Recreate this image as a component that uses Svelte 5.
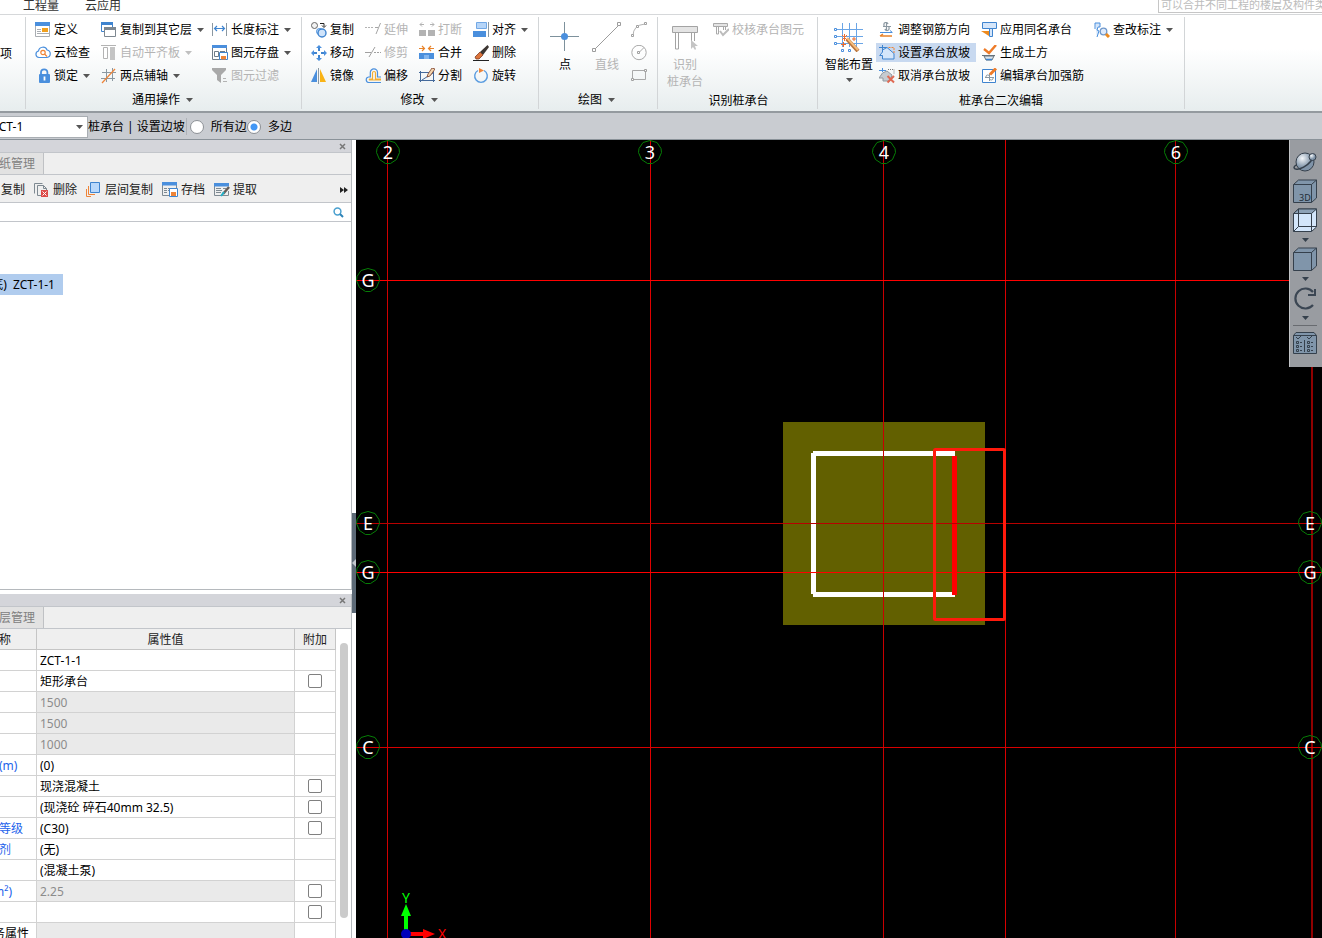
<script lang="ts">
  type Tool = { icon: string; label: string; off?: boolean; menu?: boolean; on?: boolean };

  const icons: Record<string, string> = {
    define:
      '<path d="M.5 1v13.500h14V1" fill="#fff" stroke="#a9adb2"/><path fill="#4a8fdd" d="M0 0h15v4H0z"/><path stroke="#a9adb2" d="M2 7.500h4M2 9.500h4M2 11.500h12"/><path fill="#f0a01e" d="M7 6h6v4H7z"/>',
    cloud:
      '<path d="M4 12.500a3.300 3.300 0 0 1-.5-6.500 4.500 4.500 0 0 1 8.600-1A3.800 3.800 0 0 1 12 12.500z" fill="#fff" stroke="#4a8fdd" stroke-width="1.200"/><circle cx="8" cy="7.500" r="2.200" fill="none" stroke="#ee8438" stroke-width="1.200"/><path d="M9.500 9l2.500 2.500" stroke="#ee8438" stroke-width="1.300"/>',
    lock:
      '<path d="M6 7V4.500a3.200 3.200 0 0 1 6.400 0V7" fill="none" stroke="#4a8fdd" stroke-width="1.800"/><rect x="4" y="6" width="11" height="9" rx="1" fill="#4a8fdd"/><path d="M9.500 8.500v4" stroke="#fff" stroke-width="1.800"/>',
    floors:
      '<path d="M.5 1.500h11v8H.5z" fill="#fff" stroke="#3f84cf"/><path d="M0 0h12v3H0z" fill="#3f84cf"/><path d="M3.500 6.500h11v8h-11z" fill="#fff" stroke="#7d8790"/><path d="M3 5h12v3H3z" fill="#7d8790"/>',
    align:
      '<path d="M0 .5h15" stroke="#b3b3b3"/><path d="M2.500 2.500h4v11h-4z" fill="#fff" stroke="#b3b3b3"/><path d="M9 2h5v13H9z" fill="#c4c4c4"/>',
    axis:
      '<path d="M5.500 1v13M11.500 0v13M1 4.500h14M0 10.500h14" stroke="#8b98a1" fill="none"/><path d="M1 15L14 1" stroke="#ee8438" stroke-width="1.200"/>',
    length:
      '<path d="M.5 1v13M14.500 1v13" stroke="#8b98a1"/><path d="M2.500 6.500h10M5 4L2.500 6.500 5 9M10 4l2.500 2.500L10 9" fill="none" stroke="#3f84cf" stroke-width="1.200"/>',
    store:
      '<path d="M.5 2v12.500H8M14.500 2v5" fill="none" stroke="#6e7c88"/><path d="M0 0h15v3H0z" fill="#4a8fdd"/><path d="M2.500 6.500h4v5h-4zM8 6.500h5" fill="none" stroke="#6e7c88"/><path d="M7.500 7.500h8v7h-8z" fill="#fff" stroke="#3f84cf"/><path d="M9 11h5v3.500H9z" fill="#ee8438"/>',
    filter:
      '<path d="M0 0h14v2L9 7v8l-4-3V7L0 2z" fill="#a9a9a9"/><path d="M11 10.500h3M11 13.500h4" stroke="#b3b3b3"/>',
    copy:
      '<circle cx="3.500" cy="3.500" r="3" fill="#f2f2f2" stroke="#666"/><path d="M9 1.500h4v3M11 3.500l2 2 2-2" fill="none" stroke="#222"/><circle cx="8.500" cy="9.500" r="3" fill="#cfe3fa" stroke="#4a8fdd"/><circle cx="11" cy="11" r="4" fill="#cfe3fa" stroke="#3f84cf" stroke-width="1.400"/>',
    move: '<path d="M8 2v4M8 10v4M2 8h4M10 8h4" stroke="#3f84cf" stroke-width="2"/><path d="M8 0l3 3H5zM8 16l3-3H5zM0 8l3-3v6zM16 8l-3-3v6z" fill="#4a8fdd"/>',
    mirror:
      '<path d="M6 1v13H0z" fill="#4a8fdd"/><path d="M9 1v13h6z" fill="#f9b316"/><path d="M7.500 0v16" stroke="#8b98a1"/>',
    extend:
      '<path d="M0 5.500h9" stroke="#b3b3b3" stroke-dasharray="2 1"/><path d="M10 5.500h3M15.500 1L11 12" fill="none" stroke="#a5a5a5"/>',
    trim: '<path d="M0 7.500h6" stroke="#a0a0a0"/><path d="M9 7.500h7" stroke="#a0a0a0" stroke-dasharray="2 1"/><path d="M10 2L4 12" stroke="#a0a0a0"/>',
    offset:
      '<path d="M16 14.500H3.500a2.800 2.800 0 0 1 0-5.500h1.800V4.500a3.600 3.600 0 0 1 7.200 0V9H16" fill="none" stroke="#4a8fdd" stroke-width="1.200"/><path d="M16 12H4.500a.8.8 0 0 1 0-1h3V5a1.500 1.500 0 0 1 3 0v6H16" fill="none" stroke="#f3ae33" stroke-width="1.200"/>',
    cut: '<path d="M0 8h7v6H0zM9 8h7v6H9z" fill="#b3b3b3"/><path d="M1 2.500h4M11 2.500h4M3 .5l-2 2 2 2M13 .5l2 2-2 2" fill="none" stroke="#b3b3b3"/>',
    merge:
      '<path d="M0 8h15v6H0z" fill="#4a8fdd"/><path d="M0 3.500h5M10 3.500h5M3 1l2.500 2.500L3 6M12 1L9.500 3.500 12 6" fill="none" stroke="#e8832a" stroke-width="1.200"/><path d="M5 10h5v4H5z" fill="#82b5ee"/>',
    split:
      '<path d="M1.500 3v11M14.500 3v11M0 4.500h10M0 12.500h16M3 12L14 5" fill="none" stroke="#44699b"/><path d="M9 6l4-6 3 1-5 7-3 1z" fill="#f4d7b0" stroke="#7b3c26" stroke-width=".8"/>',
    justify:
      '<path d="M3.500.5h10v6h-10z" fill="#b6d5f8" stroke="#72a8e5"/><path d="M0 9h13v6H0z" fill="#4a8fdd"/><path d="M15.500 0v15" stroke="#8b98a1"/>',
    erase:
      '<path d="M14.500 0L16 2 10 10 7 7z" fill="#3c3632"/><path d="M7 7l3 3-4 4H3l-1-2z" fill="#dc7339" stroke="#7b3c26" stroke-width=".8"/><path d="M0 15.500h16" stroke="#222"/>',
    rotate:
      '<path d="M5 2.500a6.300 6.300 0 1 0 6 0" fill="none" stroke="#5a9ce0" stroke-width="1.400"/><path d="M6 0l5 2.500L6 5z" fill="#ee8438"/>',
    check:
      '<path d="M.5 1.500h14v3H.5z" fill="#e4e4e4" stroke="#a9a9a9"/><path d="M3.500 5v7h2V5M10.500 5v3M12.500 5v3" fill="none" stroke="#a9a9a9"/><path d="M7 9l3 4 6-6" fill="none" stroke="#bcbcbc" stroke-width="2"/>',
    rebar:
      '<path d="M7.500 0v9M4 4.500h8M5 4V3a2 2 0 0 1 4-1M10 5v1a2 2 0 0 1-4 1" fill="none" stroke="#8b98a1" stroke-width="1.200"/><path d="M1 10.500h12M11 8.500l2.500 2" stroke="#4a8fdd" fill="none"/><path d="M1 14h12M4 12l-3 2" stroke="#e8832a" stroke-width="1.400" fill="none"/>',
    slope:
      '<path d="M3.500 0v5M0 2.500h8" fill="none" stroke="#3f84cf"/><path d="M3.500 5L8 2.500l7 6v5.500H3.500v-3.500H.7L3.500 7z" fill="#d5e6fa" stroke="#3f84cf"/><path d="M9.500 2.500h5.500v6" fill="none" stroke="#ee8438" stroke-dasharray="2 1"/>',
    unslope:
      '<path d="M0 2.500h7M3.500 0v4" stroke="#4a8fdd"/><path d="M3.500 5L8 3l5 4-2 6H4v-3H0z" fill="#c6cbd0" stroke="#9299a0"/><path d="M9 1.500h6V6" fill="none" stroke="#777" stroke-dasharray="1 1"/><path d="M8.500 8l6.500 6.500M15 8l-6.500 6.500" stroke="#df6a53" stroke-width="2"/>',
    apply:
      '<path d="M1.500.5h14v6h-14z" fill="#d5e6fa" stroke="#3f84cf"/><path d="M8.500 6.500h3v8h-3z" fill="#d5e6fa" stroke="#3f84cf"/><path d="M0 9h8v5z" fill="#ee8a1d"/>',
    earth:
      '<path d="M3 4l5 4 7-8" fill="none" stroke="#ee7b28" stroke-width="2.400"/><path d="M1 10.500h13M3 11l2 4h6l2-4z" fill="#dce5ed" stroke="#66737d"/><path d="M5 14.500h6" stroke="#3f84cf" stroke-width="1.500"/>',
    edit: '<path d="M1.500 1.500h13v13h-13z" fill="#fff" stroke="#3f84cf"/><path d="M8.500 6v7M4 9.500h9M5 9V8a2 2 0 0 1 3.500 0M12 10v1a2 2 0 0 1-3.500 0" fill="none" stroke="#8b98a1"/><path d="M15 .5L9 6.500" stroke="#ee7b28" stroke-width="3"/>',
    inspect:
      '<path d="M1 1h5v4H4l-1 3 2 1-2 6" fill="#d5e6fa" stroke="#4a8fdd"/><path d="M1 1v6" stroke="#4a8fdd"/><circle cx="9.500" cy="9.500" r="3.300" fill="#dfeafa" stroke="#6f98cb" stroke-width="1.300"/><path d="M12 12l3 3" stroke="#ee8a1d" stroke-width="3"/>',
    remove:
      '<path d="M.5 11.500V1.500h8M3.500 13.500v-10h6l3 3M9.500 3.500v3h3v2" fill="none" stroke="#7f8a92"/><path d="M3.500 13.500H7" stroke="#7f8a92"/><path d="M7 8h7v7H7z" fill="#dd4a48"/><path d="M8.500 9.500l4 4M12.500 9.500l-4 4" stroke="#fff"/>',
    layerCopy:
      '<path d="M4.500.5h9v10h-9z" fill="#b9d8fb" stroke="#3f84cf"/><path d="M2.500 4v8.500H9M.5 7v7.500H5" fill="none" stroke="#ee8438"/>',
    archive:
      '<path d="M.5 2v11.500H7M14.500 2v5M2 6.500h3M2 8.500h3M2 10.500h3M6 6.500h3M6 8.500h2M10 6.500h3" fill="none" stroke="#7f8a92"/><path d="M0 0h15v3.500H0z" fill="#4a8fdd"/><path d="M7.500 6.500h8v8h-8z" fill="#fff" stroke="#3f84cf"/><path d="M9 10h5v4H9z" fill="#ee8438"/>',
    extract:
      '<path d="M.5 2v11.500h14V9M2 6.500h5M2 8.500h6M2 10.500h5M9 6.500h3" fill="none" stroke="#7f8a92"/><path d="M0 1h15v3.500H0z" fill="#4a8fdd"/><path d="M15 5l-6 7" stroke="#665d58" stroke-width="2.500"/><path d="M10 10l-3 4" stroke="#23b1c8" stroke-width="2"/>',
    arc: '<path d="M2 14Q2 3 14 2" fill="none" stroke="#b3b3b3"/><path d="M.5 12.500h2v2h-2zM5.500 3.500h2v2h-2zM13.500.5h2v2h-2z" fill="#fff" stroke="#a0a0a0"/>',
    circle:
      '<circle cx="8" cy="7.500" r="7.200" fill="none" stroke="#a9a9a9"/><path d="M8 7.500l5-5" stroke="#a9a9a9"/><path d="M6.500 6.500h2v2h-2z" fill="#fff" stroke="#a0a0a0"/>',
    rect: '<path d="M1.500 2.500h13v9h-13z" fill="none" stroke="#a9a9a9"/><path d="M.5 10.500h2v2h-2zM13.500 1.500h2v2h-2z" fill="#fff" stroke="#a0a0a0"/>',
  };

  const common: Tool[][] = [
    [
      { icon: "define", label: "定义" },
      { icon: "cloud", label: "云检查" },
      { icon: "lock", label: "锁定", menu: true },
    ],
    [
      { icon: "floors", label: "复制到其它层", menu: true },
      { icon: "align", label: "自动平齐板", off: true, menu: true },
      { icon: "axis", label: "两点辅轴", menu: true },
    ],
    [
      { icon: "length", label: "长度标注", menu: true },
      { icon: "store", label: "图元存盘", menu: true },
      { icon: "filter", label: "图元过滤", off: true },
    ],
  ];

  const modify: Tool[][] = [
    [
      { icon: "copy", label: "复制" },
      { icon: "move", label: "移动" },
      { icon: "mirror", label: "镜像" },
    ],
    [
      { icon: "extend", label: "延伸", off: true },
      { icon: "trim", label: "修剪", off: true },
      { icon: "offset", label: "偏移" },
    ],
    [
      { icon: "cut", label: "打断", off: true },
      { icon: "merge", label: "合并" },
      { icon: "split", label: "分割" },
    ],
    [
      { icon: "justify", label: "对齐", menu: true },
      { icon: "erase", label: "删除" },
      { icon: "rotate", label: "旋转" },
    ],
  ];

  const edit: Tool[][] = [
    [
      { icon: "rebar", label: "调整钢筋方向" },
      { icon: "slope", label: "设置承台放坡", on: true },
      { icon: "unslope", label: "取消承台放坡" },
    ],
    [
      { icon: "apply", label: "应用同名承台" },
      { icon: "earth", label: "生成土方" },
      { icon: "edit", label: "编辑承台加强筋" },
    ],
    [{ icon: "inspect", label: "查改标注", menu: true }],
  ];

  const listTools = [
    { icon: "remove", label: "删除" },
    { icon: "layerCopy", label: "层间复制" },
    { icon: "archive", label: "存档" },
    { icon: "extract", label: "提取" },
  ];

  const props = [
    { name: "", value: "ZCT-1-1" },
    { name: "", value: "矩形承台", check: true },
    { name: "", value: "1500", locked: true },
    { name: "", value: "1500", locked: true },
    { name: "", value: "1000", locked: true },
    { name: "(m)", value: "(0)", blue: true },
    { name: "", value: "现浇混凝土", check: true },
    { name: "", value: "(现浇砼 碎石40mm 32.5)", check: true },
    { name: "等级", value: "(C30)", check: true, blue: true },
    { name: "剂", value: "(无)", blue: true },
    { name: "", value: "(混凝土泵)" },
    { name: "m²)", value: "2.25", locked: true, check: true, blue: true, cut: true },
    { name: "", value: "", check: true },
    { name: "务属性", value: "", locked: true, cut: true },
  ];

  const columns = [
    { x: 31, color: "#d00000" },
    { x: 294, color: "#e00000" },
    { x: 527, color: "#c80000" },
    { x: 649, color: "#d80000" },
    { x: 819, color: "#c80000" },
    { x: 955, color: "#900000", width: 2 },
  ];
  const rows = [
    { y: 140, color: "#ff0000" },
    { y: 383, color: "#b80000" },
    { y: 432, color: "#ff0000" },
    { y: 607, color: "#d80000" },
  ];
  const bubbles = [
    { x: 32, y: 12, text: "2" },
    { x: 294, y: 12, text: "3" },
    { x: 528, y: 12, text: "4" },
    { x: 820, y: 12, text: "6" },
    { x: 12, y: 140, text: "G" },
    { x: 12, y: 383, text: "E" },
    { x: 12, y: 432, text: "G" },
    { x: 12, y: 607, text: "C" },
    { x: 954, y: 383, text: "E" },
    { x: 954, y: 432, text: "G" },
    { x: 954, y: 607, text: "C" },
  ];

  let slopeMode = $state("multi");
  let member = $state("ZCT-1");
</script>

{#snippet icon(name: string)}
  <svg class="icon" viewBox="0 0 16 16" aria-hidden="true">{@html icons[name]}</svg>
{/snippet}

{#snippet arrow()}
  <svg class="arrow" viewBox="0 0 7 4" aria-hidden="true"><path d="M0 0h7L3.500 4z" /></svg>
{/snippet}

{#snippet toolGrid(cols: Tool[][])}
  {#each cols as col}
    <div class="tools">
      {#each col as tool}
        <button class="tool" class:off={tool.off} class:on={tool.on}>
          {@render icon(tool.icon)}
          <span>{tool.label}</span>
          {#if tool.menu}{@render arrow()}{/if}
        </button>
      {/each}
    </div>
  {/each}
{/snippet}

{#snippet titleBar()}
  <div class="title-bar">
    <button class="close" aria-label="关闭">
      <svg viewBox="0 0 7 7"><path d="M1 1l5 5M6 1L1 6" stroke="#777" stroke-width="1.500" /></svg>
    </button>
  </div>
{/snippet}

<div class="app">
  <nav class="tabs">
    <a href="#quantity">工程量</a>
    <a href="#cloud">云应用</a>
    <input class="hint" aria-label="搜索" placeholder="可以合并不同工程的楼层及构件类型" />
  </nav>

  <div class="ribbon">
    <section class="group first">
      <div class="body"><button class="tool">项</button></div>
    </section>

    <section class="group common">
      <div class="body">{@render toolGrid(common)}</div>
      <button class="caption">通用操作 {@render arrow()}</button>
    </section>

    <section class="group modify">
      <div class="body">{@render toolGrid(modify)}</div>
      <button class="caption">修改 {@render arrow()}</button>
    </section>

    <section class="group draw">
      <div class="body">
        <button class="big">
          <svg viewBox="0 0 30 30">
            <path d="M0 14.500h29M14.500 0v29" stroke="#7d919c" />
            <circle cx="14.500" cy="14.500" r="3.500" fill="#4a8fdd" />
          </svg>
          点
        </button>
        <button class="big off">
          <svg viewBox="0 0 30 30">
            <path d="M3 27L27 3" stroke="#9c9c9c" />
            <path d="M.5 26.500h3v3h-3zM25.500.5h3v3h-3z" fill="#fff" stroke="#9c9c9c" />
          </svg>
          直线
        </button>
        <div class="tools">
          <button class="tool" aria-label="弧">{@render icon("arc")}</button>
          <button class="tool" aria-label="圆">{@render icon("circle")}</button>
          <button class="tool" aria-label="矩形">{@render icon("rect")}</button>
        </div>
      </div>
      <button class="caption">绘图 {@render arrow()}</button>
    </section>

    <section class="group identify">
      <div class="body">
        <button class="big off">
          <svg viewBox="0 0 30 30">
            <path d="M2.500 4.500h25v6h-25z" fill="#e4e4e4" stroke="#a3a3a3" />
            <path d="M5.500 11v16h3V11M21.500 11v8M24.500 11v8" fill="none" stroke="#a3a3a3" />
            <path d="M21 18v9l2-2 2 3 1-1-1-3h3z" fill="#c4c4c4" />
          </svg>
          识别<br />桩承台
        </button>
        {@render toolGrid([[{ icon: "check", label: "校核承台图元", off: true }]])}
      </div>
      <div class="caption">识别桩承台</div>
    </section>

    <section class="group edit">
      <div class="body">
        <button class="big">
          <svg viewBox="0 0 30 30">
            <path d="M8.500 1v24M15.500 1v24M22.500 1v24M2 7.500h27M2 14.500h27M2 21.500h27" stroke="#6aa5e6" />
            <path d="M.5 6.500h2v2h-2zM.5 13.500h2v2h-2zM.5 20.500h2v2h-2zM7.500 27.500h2v2h-2zM14.500 27.500h2v2h-2z" fill="#fff" stroke="#4a8fdd" />
            <path d="M13 17l11 12" stroke="#b9743b" stroke-width="4" />
            <path d="M13 16l11 12" stroke="#f5bd7e" stroke-width="2" />
            <path d="M8 13l5 5M13 13l-5 5M10.500 12v7M20 15v4M18 17h4M9.500 20v5M7 22.500h5" stroke="#ee6d2d" />
          </svg>
          智能布置
          {@render arrow()}
        </button>
        {@render toolGrid(edit)}
      </div>
      <div class="caption">桩承台二次编辑</div>
    </section>
  </div>

  <div class="options">
    <div class="member">
      <select bind:value={member} aria-label="构件">
        <option>ZCT-1</option>
      </select>
      {@render arrow()}
    </div>
    <span>桩承台 | 设置边坡</span>
    <i class="divider"></i>
    <label><input type="radio" value="all" bind:group={slopeMode} />所有边</label>
    <label><input type="radio" value="multi" bind:group={slopeMode} />多边</label>
  </div>

  <main>
    <aside>
      <section class="panel list">
        {@render titleBar()}
        <div class="panel-tabs"><button>纸管理</button></div>
        <div class="toolbar">
          <button>复制</button>
          {#each listTools as tool}
            <button>{@render icon(tool.icon)}{tool.label}</button>
          {/each}
          <button class="more" aria-label="更多">
            <svg viewBox="0 0 8 6"><path d="M0 0l4 3-4 3zM4 0l4 3-4 3z" fill="#222" /></svg>
          </button>
        </div>
        <div class="search">
          <input type="text" aria-label="搜索构件" />
          <svg viewBox="0 0 11 11" aria-hidden="true">
            <circle cx="4.500" cy="4.500" r="3.400" fill="none" stroke="#4aa0cf" stroke-width="1.500" />
            <path d="M7 7l3 3" stroke="#2d83b8" stroke-width="2" />
          </svg>
        </div>
        <div class="tree">
          <button><span>底)&nbsp; ZCT-1-1</span></button>
        </div>
      </section>

      <section class="panel properties">
        {@render titleBar()}
        <div class="panel-tabs"><button>层管理</button></div>
        <div class="table-wrap">
          <table>
            <colgroup><col class="c-name" /><col /><col class="c-check" /></colgroup>
            <thead>
              <tr><th class="name"><span>称</span></th><th>属性值</th><th>附加</th></tr>
            </thead>
            <tbody>
              {#each props as row, i}
                <tr>
                  <td class="name" class:blue={row.blue}><span class:cut={row.cut}>{row.name}</span></td>
                  <td class:locked={row.locked}>{row.value}</td>
                  <td class="check">
                    {#if row.check}<input type="checkbox" aria-label={`附加 ${i + 1}`} />{/if}
                  </td>
                </tr>
              {/each}
            </tbody>
          </table>
          <div class="scroll"><i></i></div>
        </div>
      </section>
    </aside>

    <div class="splitter">
      <button aria-label="收起">
        <svg viewBox="0 0 4 8"><path d="M4 0v8L0 4z" fill="#c3c8ce" /></svg>
      </button>
    </div>

    <div class="canvas">
      <svg class="drawing">
        <rect x="427" y="282" width="202" height="203" fill="#626000" />
        <g stroke="#fff" stroke-width="5">
          <path d="M457.500 313v141" />
          <path d="M457 313.500h142M457 454.500h142" />
        </g>
        <path d="M598.500 316v139" stroke="#f00" stroke-width="5" />
        {#each columns as c}
          <rect x={c.x} y="0" width={c.width ?? 1} height="100%" fill={c.color} />
        {/each}
        {#each rows as r}
          <rect x="0" y={r.y} width="100%" height="1" fill={r.color} />
        {/each}
        <rect x="578.500" y="309.500" width="70" height="170" rx="1" fill="none" stroke="#ff1a0c" stroke-width="3" />
        {#each bubbles as b}
          <g transform={`translate(${b.x} ${b.y})`}>
            <path d="M0-11.500l7 2 4 6 .5 4-3 7-6 4h-5l-6-4-3-7 .5-4 4-6z" fill="none" stroke="#067d06" />
            <text class="mark" y="7">{b.text}</text>
          </g>
        {/each}
        <path d="M50 794V776" stroke="#0f0" stroke-width="4" />
        <path d="M50 764l5 12H45z" fill="#0f0" />
        <path d="M50 794h18" stroke="#f00" stroke-width="4" />
        <path d="M79 794l-12 5v-10z" fill="#f00" />
        <circle cx="50" cy="794" r="5" fill="#00b" />
        <text class="axis y" x="50" y="763">Y</text>
        <text class="axis x" x="86" y="799">X</text>
      </svg>

      <div class="views">
        <button aria-label="动态观察">
          <svg viewBox="0 0 24 24">
            <defs>
              <radialGradient id="ball" cx=".35" cy=".3"><stop offset="0" stop-color="#f4f7fa" /><stop offset="1" stop-color="#7f93a8" /></radialGradient>
            </defs>
            <circle cx="12" cy="12" r="9" fill="url(#ball)" stroke="#35404c" />
            <path d="M1 18c2 4 17-2 20-13M1 18c0-2 2-3 3-3" fill="none" stroke="#35404c" stroke-width="1.500" />
            <circle cx="19.500" cy="7" r="3.500" fill="url(#ball)" stroke="#35404c" />
          </svg>
        </button>
        <button aria-label="三维">
          <svg viewBox="0 0 24 24">
            <path d="M.5 5.500l5-4.500h18v18l-5 4.500H.5zM.5 5.500h18v18M18.500 5.500l5-4.500" fill="#8095aa" stroke="#35404c" />
            <text x="6" y="22" class="cube">3D</text>
          </svg>
        </button>
        <button aria-label="线框">
          <svg viewBox="0 0 24 24">
            <path d="M.5 5.500l5-4.500h18v18l-5 4.500H.5z" fill="#d3e6fb" stroke="#35404c" />
            <path d="M.5 5.500l5-4.500h18l-5 4.500z" fill="#8da2b7" stroke="#35404c" />
            <path d="M18.500 5.500v18M5.500 1v17.500h18M5.500 18.500l-5 5" fill="none" stroke="#35404c" />
          </svg>
          {@render arrow()}
        </button>
        <button aria-label="俯视">
          <svg viewBox="0 0 24 24">
            <path d="M.5 5.500l5-4.500h18v18l-5 4.500H.5zM.5 5.500h18v18M18.500 5.500l5-4.500" fill="#8095aa" stroke="#35404c" />
          </svg>
          {@render arrow()}
        </button>
        <button aria-label="旋转视图">
          <svg viewBox="0 0 24 24">
            <path d="M20 6a10 10 0 1 0 0 13" fill="none" stroke="#3b4653" stroke-width="2.200" />
            <path d="M22 3v6h-7" fill="none" stroke="#3b4653" stroke-width="2" />
          </svg>
          {@render arrow()}
        </button>
        <hr />
        <button aria-label="显示设置">
          <svg viewBox="0 0 24 24">
            <path d="M.5 4.500L3 1.500h18l2.500 3v18H.5z" fill="#8095aa" stroke="#35404c" />
            <path d="M.5 4.500h23M11.500 9v12M3 6l2 2 3-3M14 6l2 2 3-3" fill="none" stroke="#35404c" />
            <path d="M3.500 10.500h2v2h-2zM3.500 14.500h2v2h-2zM3.500 18.500h2v2h-2zM14.500 10.500h2v2h-2zM14.500 14.500h2v2h-2zM14.500 18.500h2v2h-2zM7 11.500h2M7 15.500h2M7 19.500h2M18 11.500h2M18 15.500h2M18 19.500h2" fill="none" stroke="#35404c" />
          </svg>
        </button>
      </div>
    </div>
  </main>
</div>

<style>
  :global(body) {
    overflow: hidden;
    background: #fff;
  }

  .app {
    display: flex;
    flex-direction: column;
    height: 100vh;
    overflow: hidden;
    color: #000;
    font-family: "Noto Sans", "Noto Sans CJK SC", sans-serif;
    font-size: 12px;
    line-height: 16px;
  }

  .app * {
    box-sizing: border-box;
  }

  button,
  input,
  select {
    margin: 0;
    padding: 0;
    border: none;
    background: none;
    color: inherit;
    font: inherit;
  }

  svg {
    display: block;
    flex: none;
  }

  .icon {
    width: 16px;
    height: 16px;
  }

  .arrow {
    width: 7px;
    height: 4px;
    fill: #555;
  }

  .tabs {
    display: flex;
    flex: none;
    align-items: flex-end;
    gap: 26px;
    height: 15px;
    padding-left: 23px;
    overflow: hidden;
    border-bottom: 1px solid #d6d8da;
  }

  .tabs a {
    color: #333;
    line-height: 16px;
    text-decoration: none;
  }

  .hint {
    width: 164px;
    height: 18px;
    margin: 0 0 1px auto;
    padding-left: 2px;
    border: 1px solid #c6c6c6;
    border-right: none;
    font-size: 11px;
  }

  .hint::placeholder {
    color: #bcbcbc;
  }

  .ribbon {
    display: flex;
    flex: none;
    height: 98px;
    padding: 2px 0;
    border-bottom: 2px solid #949a9f;
    background: linear-gradient(#fff 35%, #e7edee);
  }

  .group {
    display: flex;
    flex: none;
    flex-direction: column;
    border-right: 1px solid #d2d5d7;
  }

  .body {
    display: flex;
    flex: none;
    height: 72px;
    padding-top: 2px;
  }

  .first {
    width: 26px;
  }

  .first .body {
    align-items: center;
  }

  .first .tool {
    padding: 0;
  }

  .common {
    width: 276px;
    padding-left: 6px;
  }

  .common .tools:nth-child(1) {
    width: 66px;
  }

  .common .tools:nth-child(2) {
    width: 111px;
  }

  .modify {
    width: 237px;
    padding-left: 6px;
  }

  .modify .tools {
    width: 54px;
  }

  .draw {
    width: 119px;
    padding-left: 5px;
  }

  .identify {
    width: 160px;
    padding-left: 2px;
  }

  .edit {
    width: 367px;
  }

  .edit .tools {
    width: 102px;
  }

  .edit .tools:nth-child(3) {
    width: 113px;
  }

  .edit .big {
    width: 58px;
    padding-left: 4px;
  }

  .tools {
    display: flex;
    flex: none;
    flex-direction: column;
    align-items: flex-start;
    gap: 4px;
    padding-top: 1px;
  }

  .tool {
    display: flex;
    align-items: center;
    gap: 3px;
    height: 19px;
    padding: 0 6px 0 3px;
    white-space: nowrap;
  }

  .tool .arrow {
    margin-left: 2px;
  }

  .tool.on {
    background: #c8d9f0;
  }

  .off {
    color: #b4b4b4;
  }

  .off .arrow {
    fill: #c0c0c0;
  }

  .big {
    display: flex;
    flex: none;
    flex-direction: column;
    align-items: center;
    width: 42px;
    padding-top: 3px;
    line-height: 17px;
    white-space: nowrap;
  }

  .identify .big {
    width: 50px;
  }

  .big svg:first-child {
    width: 30px;
    height: 30px;
    margin-bottom: 4px;
  }

  .big .arrow {
    margin-top: 5px;
  }

  .caption {
    display: flex;
    align-items: flex-end;
    justify-content: center;
    gap: 6px;
    height: 21px;
    line-height: 16px;
  }

  button.caption {
    align-items: center;
    height: 22px;
    padding: 2px 8px 0 0;
  }

  .options {
    display: flex;
    flex: none;
    align-items: center;
    height: 27px;
    padding-top: 1px;
    border-bottom: 1px solid #8a9299;
    background: #c9ccd1;
    white-space: nowrap;
  }

  .member {
    display: grid;
    grid-template-columns: 100%;
    align-items: center;
    justify-items: end;
    width: 88px;
    height: 22px;
    overflow: hidden;
    border: 1px solid #a9aeb3;
    border-left: none;
    background: #fff;
  }

  .member > :global(*) {
    grid-area: 1 / 1;
  }

  .member .arrow {
    margin-right: 4px;
  }

  select {
    width: 95px;
    appearance: none;
  }

  .divider {
    width: 1px;
    height: 17px;
    margin: 0 3px 0 1px;
    background: #aeb2b7;
  }

  label {
    display: flex;
    align-items: center;
    gap: 7px;
  }

  input[type="radio"] {
    width: 14px;
    height: 14px;
    border: 1px solid #8d9196;
    border-radius: 50%;
    background: #fff;
    appearance: none;
  }

  input[type="radio"]:checked {
    background: radial-gradient(circle, #4297f5 3px, #fff 4px);
  }

  main {
    display: flex;
    flex: 1;
    min-height: 0;
  }

  aside {
    display: flex;
    flex: none;
    flex-direction: column;
    gap: 4px;
    width: 352px;
  }

  .panel {
    display: flex;
    flex-direction: column;
    min-height: 0;
    overflow: hidden;
    border: 1px solid #b5b9bd;
    border-width: 0 1px 1px 0;
  }

  .list {
    flex: 450;
  }

  .properties {
    flex: 344;
    border-bottom: none;
  }

  .title-bar {
    display: flex;
    flex: none;
    align-items: center;
    justify-content: flex-end;
    height: 13px;
    padding-right: 5px;
    border-bottom: 1px solid #c2c5ca;
    background: #d4d5da;
  }

  .close svg {
    width: 7px;
    height: 7px;
  }

  .panel-tabs {
    display: flex;
    flex: none;
    height: 22px;
    border-bottom: 1px solid #c2c5ca;
    background: #efefef;
  }

  .panel-tabs button {
    width: 44px;
    border-right: 1px solid #bfc1c4;
    background: #e2e2e2;
    color: #808080;
    text-align: left;
    text-indent: -1px;
  }

  .toolbar {
    display: flex;
    flex: none;
    align-items: center;
    gap: 9px;
    height: 28px;
    padding-top: 2px;
    border-bottom: 1px solid #c2c5ca;
    background: #efefef;
    color: #222;
  }

  .toolbar button {
    display: flex;
    align-items: center;
    gap: 3px;
  }

  .toolbar button:first-child {
    padding-left: 1px;
  }

  .toolbar .more {
    margin-left: auto;
    padding-right: 3px;
  }

  .more svg {
    width: 8px;
    height: 6px;
  }

  .search {
    display: flex;
    flex: none;
    align-items: center;
    height: 19px;
    padding-right: 7px;
    border-bottom: 1px solid #c2c5ca;
  }

  .search input {
    flex: 1;
    min-width: 0;
    outline: none;
  }

  .search svg {
    width: 11px;
    height: 11px;
  }

  .tree {
    flex: 1;
    padding-top: 52px;
  }

  .tree button {
    display: flex;
    justify-content: flex-end;
    align-items: center;
    width: 63px;
    height: 21px;
    padding-right: 8px;
    overflow: hidden;
    background: #b0ccee;
    white-space: nowrap;
  }

  .table-wrap {
    display: flex;
    flex: 1;
    min-height: 0;
    overflow: hidden;
  }

  table {
    flex: 1;
    height: max-content;
    border-spacing: 0;
    table-layout: fixed;
  }

  .c-name {
    width: 37px;
  }

  .c-check {
    width: 41px;
  }

  th,
  td {
    height: 21px;
    padding: 2px 3px 0;
    overflow: hidden;
    border-right: 1px solid #d2d2d2;
    border-bottom: 1px solid #d2d2d2;
    text-align: left;
    white-space: nowrap;
  }

  th {
    padding: 2px 0 0;
    border-color: #c5c5c5;
    background: #efefef;
    color: #222;
    font-weight: 400;
    text-align: center;
  }

  .name {
    padding: 2px 0 0;
    text-align: left;
  }

  .name span {
    margin-left: -1px;
  }

  .name.blue {
    color: #2463eb;
  }

  .name .cut {
    margin-left: -7px;
  }

  .locked {
    background: #eaeaea;
    color: #8c8c8c;
  }

  .check {
    padding-top: 0;
    text-align: center;
  }

  input[type="checkbox"] {
    display: block;
    width: 14px;
    height: 14px;
    margin: 0 auto;
    border: 1px solid #808080;
    border-radius: 2px;
    background: #fff;
    appearance: none;
  }

  .scroll {
    display: flex;
    justify-content: center;
    width: 15px;
    padding: 14px 0 20px;
  }

  .scroll i {
    width: 8px;
    border-radius: 4px;
    background: #cbcbcb;
  }

  .splitter {
    display: flex;
    flex: none;
    align-items: center;
    width: 4px;
    padding-top: 48px;
  }

  .splitter button {
    display: flex;
    align-items: center;
    width: 4px;
    height: 100px;
    background: #5d6a77;
  }

  .splitter svg {
    width: 4px;
    height: 8px;
  }

  .canvas {
    position: relative;
    flex: 1;
    min-width: 0;
    overflow: hidden;
    background: #000;
  }

  .drawing {
    width: 100%;
    height: 100%;
  }

  .mark {
    fill: #fff;
    font-size: 18px;
    text-anchor: middle;
  }

  .axis {
    font-size: 14px;
    text-anchor: middle;
  }

  .axis.y {
    fill: #0f0;
  }

  .axis.x {
    fill: #f00;
  }

  .views {
    position: absolute;
    top: 0;
    right: 0;
    display: flex;
    flex-direction: column;
    align-items: center;
    gap: 5px;
    width: 33px;
    padding: 10px 2px 12px 0;
    border-left: 1px solid #c0c2c5;
    background: #999ca1;
  }

  .views button {
    display: flex;
    flex-direction: column;
    align-items: center;
    gap: 6px;
  }

  .views button svg:first-child {
    width: 24px;
    height: 24px;
  }

  .views .arrow {
    fill: #35404c;
  }

  .views hr {
    width: 24px;
    margin: 0;
    border: none;
    border-top: 1px solid #686b70;
  }

  .cube {
    fill: #222c36;
    font-size: 9px;
  }
</style>
